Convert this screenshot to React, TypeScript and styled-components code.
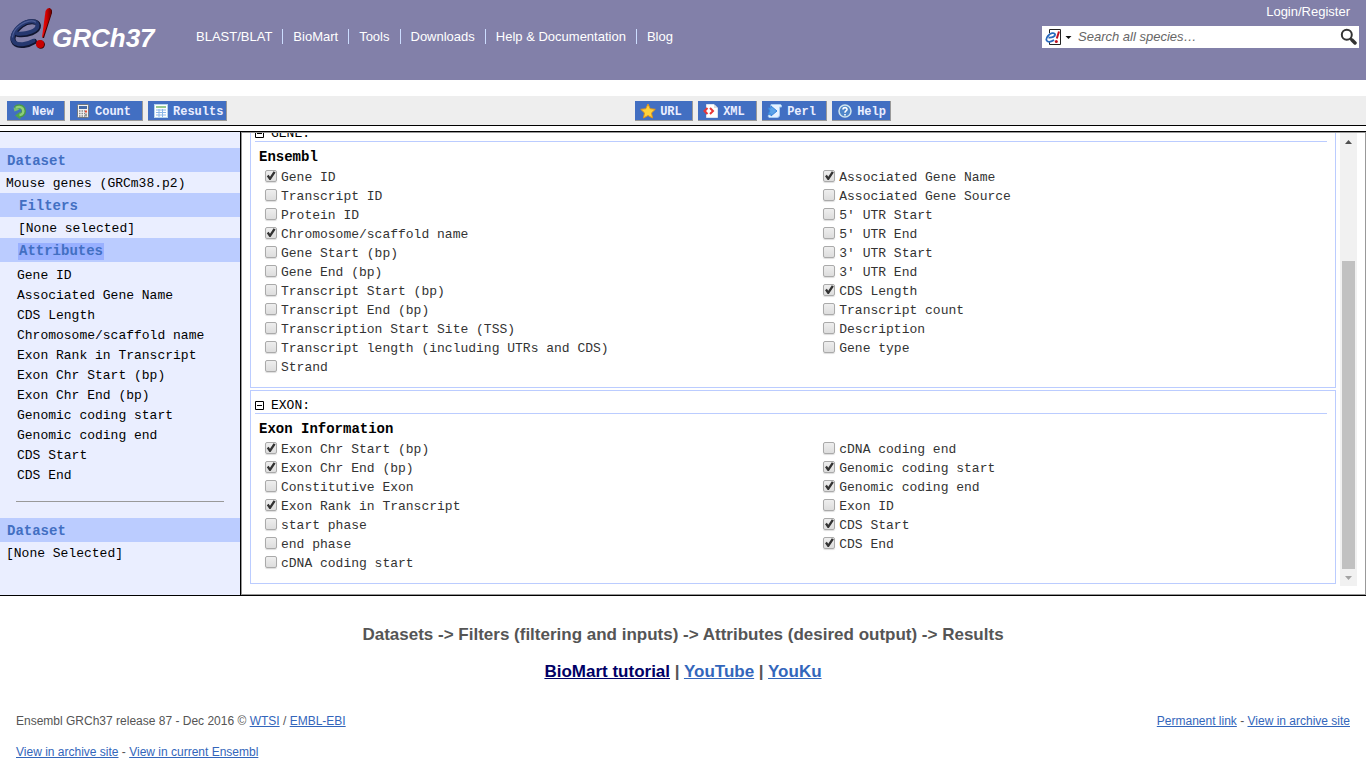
import React, { useLayoutEffect, useRef } from "react";
import styled, { createGlobalStyle } from "styled-components";

const GlobalStyle = createGlobalStyle`
  * { box-sizing: border-box; }
  body { margin: 0; background: #fff; font-family: "Liberation Sans", Arial, sans-serif; }
`;

const mono = `"Liberation Mono", "Courier New", monospace`;

/* ---------- masthead ---------- */

const Masthead = styled.header`
  display: flex;
  justify-content: space-between;
  height: 80px;
  background: #8280a9;
  color: #fff;
  font-size: 13px;
`;
const Brand = styled.div`
  display: flex;
  align-items: flex-start;
  padding-left: 8px;
`;
const LogoLink = styled.a`
  display: flex;
  align-items: flex-start;
  width: 178px;
  padding-top: 6px;
  color: #fff;
  text-decoration: none;
`;
const LogoText = styled.span`
  padding-top: 17px;
  font: italic bold 26px/30px "Liberation Sans", Arial, sans-serif;
`;
const Nav = styled.nav`
  display: flex;
  padding-top: 29px;
`;
const NavLink = styled.a`
  padding: 0 10px;
  line-height: 15px;
  color: #fff;
  text-decoration: none;
  white-space: nowrap;
  & + & { border-left: 1px solid #ccddff; }
`;
const Account = styled.div`
  display: flex;
  flex-direction: column;
  align-items: flex-end;
  padding: 4px 7px 0 0;
`;
const LoginLink = styled.a`
  margin-right: 9px;
  line-height: 15px;
  color: #fff;
  text-decoration: none;
`;
const SearchForm = styled.form`
  display: flex;
  align-items: center;
  width: 317px;
  height: 22px;
  margin-top: 7px;
  padding: 0 2px 0 3px;
  background: #fff;
`;
const PlainButton = styled.button`
  display: flex;
  align-items: center;
  padding: 0;
  border: 0;
  background: none;
`;
const SearchInput = styled.input`
  flex: 1;
  min-width: 0;
  padding: 0 0 0 6px;
  border: 0;
  outline: 0;
  font: italic 13px/20px "Liberation Sans", Arial, sans-serif;
  &::placeholder { color: #666; opacity: 1; }
`;

/* ---------- toolbar ---------- */

const Toolbar = styled.div`
  display: flex;
  gap: 3px;
  margin-top: 16px;
  height: 30px;
  padding: 5px 0 0 7px;
  border-bottom: 1px solid #000;
  background: #eee;
`;
const ToolGroup = styled.div<{ $share?: string }>`
  display: flex;
  gap: 5px;
  flex: 0 0 ${(p) => p.$share ?? "auto"};
`;
const ToolButton = styled.button<{ $width: number }>`
  display: flex;
  align-items: center;
  gap: 4px;
  width: ${(p) => p.$width}px;
  height: 20px;
  padding: 0 0 0 5px;
  border: solid #999;
  border-width: 0 1px 1px 0;
  background: #426fc2;
  color: #eaeeff;
  font: bold 12px/16px ${mono};
  white-space: nowrap;
  svg { flex: none; }
`;
const ToolLabel = styled.span`
  padding-top: 2px;
`;

/* ---------- workspace ---------- */

const Workspace = styled.main`
  display: flex;
  margin-top: 5px;
  border: solid #000;
  border-width: 1px 0;
  font: 13px/20px ${mono};
`;
const Sidebar = styled.aside`
  flex: 0 0 241px;
  padding: 16px 0 32px;
  border-right: 1px solid #000;
  background: #eaeeff;
  color: #000;
`;
const SideHeading = styled.h2<{ $nested?: boolean }>`
  margin: 0;
  padding: 4px 0 1px ${(p) => (p.$nested ? 18 : 6)}px;
  background: #bbccff;
  color: #426fc2;
  font: bold 14px/19px ${mono};
`;
const Mark = styled.span<{ $active?: boolean }>`
  display: inline-block;
  padding: 0 1px;
  line-height: 17px;
  background: ${(p) => (p.$active ? "#99b0ff" : "transparent")};
`;
const SideValue = styled.p<{ $indent: number }>`
  margin: 0;
  padding: 2px 0 0 ${(p) => p.$indent}px;
  line-height: 19px;
`;
const SideList = styled.ul`
  margin: 0;
  padding: 4px 0 0 17px;
  list-style: none;
`;
const SideRule = styled.hr`
  height: 1px;
  margin: 15px 16px 16px;
  border: 0;
  background: #999;
`;
const Panel = styled.section`
  display: flex;
  flex-direction: column;
  flex: 1;
  min-width: 0;
  padding: 0 8px 8px;
  border: 1px solid #999;
`;
const PanelBody = styled.div`
  display: flex;
  gap: 4px;
  flex: 1 1 0px;
  min-height: 0;
`;
const Scroller = styled.div`
  flex: 1;
  min-width: 0;
  overflow-y: auto;
  scrollbar-width: none;
  padding-bottom: 2px;
`;
const Scrollbar = styled.div`
  display: flex;
  flex-direction: column;
  align-items: center;
  flex: 0 0 17px;
  padding: 6px 0 5px;
  background: #f1f1f1;
`;
const Thumb = styled.div`
  flex: 1;
  width: 13px;
  margin: 116px 0 6px;
  background: #c1c1c1;
`;
const Card = styled.section`
  padding: 0 0 11px 4px;
  border: 1px solid #bbccff;
  & + & { margin-top: 2px; }
`;
const CardTitle = styled.h3`
  display: flex;
  align-items: center;
  gap: 7px;
  margin: 0 8px 0 0;
  padding-top: 7px;
  border-bottom: 1px solid #bbccff;
  color: #000;
  font: 13px/15px ${mono};
`;
const Subtitle = styled.h4`
  margin: 0;
  padding: 5px 0 0 4px;
  color: #000;
  font: bold 14px/20px ${mono};
`;
const Columns = styled.div`
  display: grid;
  grid-template-columns: 12fr 11fr;
  padding-left: 10px;
`;
const Option = styled.label`
  display: flex;
  align-items: flex-start;
  gap: 4px;
  padding-top: 3px;
  color: #333;
  line-height: 16px;
  white-space: nowrap;
`;
const Tick = styled.input`
  appearance: none;
  flex: none;
  width: 12px;
  height: 12px;
  margin: 0;
  border: 1px solid #aaa;
  border-radius: 2px;
  background: linear-gradient(#eee, #ddd);
  box-shadow: 0 1px 1px #ddd;
  &:checked::before {
    content: "";
    display: block;
    width: 10px;
    height: 10px;
    background: #333;
    clip-path: polygon(8% 52%, 26% 38%, 40% 58%, 76% 2%, 96% 14%, 46% 90%, 34% 90%);
  }
`;

/* ---------- footer ---------- */

const Guide = styled.div`
  padding-top: 28px;
  color: #555;
  font-size: 17px;
  font-weight: bold;
  line-height: 21px;
  text-align: center;
  p { margin: 0 0 16px; }
`;
const TextLink = styled.a<{ $dark?: boolean }>`
  color: ${(p) => (p.$dark ? "#000066" : "#3366bb")};
  text-decoration: underline;
`;
const Footer = styled.footer`
  padding: 8px 16px 0;
  color: #555;
  font-size: 12px;
  line-height: 15px;
`;
const FooterRow = styled.div`
  display: flex;
  justify-content: space-between;
  margin: 8px 0 16px;
`;

/* ---------- drawings ---------- */

const EnsemblMark = () => (
  <svg width="44" height="46" viewBox="0 0 44 46" aria-hidden="true">
    <defs>
      <linearGradient id="red" x1="0" x2="1">
        <stop offset="0" stopColor="#f01010" />
        <stop offset="0.5" stopColor="#d00000" />
        <stop offset="1" stopColor="#700000" />
      </linearGradient>
    </defs>
    <g fill="none" strokeLinecap="round">
      <path d="M10 28.500C19 29.500 31 26 30.500 19.500C29.500 14.500 20 14.500 13.500 19.500C5.500 26 3 33 6.500 37C11 41.500 20 39.500 26.500 35.500" stroke="#10152f" strokeWidth="5" />
      <path d="M9 27.500C18 28.500 30 25 29.500 18.800C28.500 14 19.500 14 13 18.800C5 25 2.800 32 6 35.800C10 40 19 38.500 25.500 34.800" stroke="#26386f" strokeWidth="4" />
      <path d="M4.500 31C5 26 8.500 21.500 13 18.500C18 15 24.500 14 27.500 16" stroke="#4d5d96" strokeWidth="1.200" />
    </g>
    <path d="M34.500 32L38.500 5Q40 2 43 3Q45 5 43.500 8.500L36 32Z" fill="#400" />
    <path d="M34 31L37.500 5Q39 1.500 42 2Q44 4 43 8L35 31Z" fill="url(#red)" />
    <circle cx="32.800" cy="38.600" r="4.200" fill="#400" />
    <circle cx="32" cy="38" r="4" fill="#c80000" />
  </svg>
);

const SpeciesIcon = () => (
  <svg width="27" height="18" viewBox="0 0 27 18" aria-hidden="true">
    <path d="M4.500 5V1.500H15.500V16.500H4.500V13" fill="#fff" stroke="#222" />
    <path d="M3.500 9.500C7 9.800 10.500 8.500 10 6.200C9.200 4.300 5.500 5 3 7.800C0 11.500 1.500 14 4.500 13.800C6.500 13.500 8 12.700 9 12" fill="none" stroke="#2869bd" strokeWidth="1.800" />
    <path d="M11.800 10.500L14 3.500" stroke="#c01020" strokeWidth="2" />
    <circle cx="11.300" cy="13.500" r="1.500" fill="#c01020" />
    <path d="M20.500 8H26.500L23.500 11Z" fill="#111" />
  </svg>
);

const SearchIcon = () => (
  <svg width="17" height="18" viewBox="0 0 17 18" aria-hidden="true">
    <circle cx="6.800" cy="6.800" r="5" fill="none" stroke="#333" strokeWidth="2" />
    <path d="M10.500 10.500L12 12" stroke="#333" strokeWidth="2" />
    <path d="M12 12L15 15" stroke="#333" strokeWidth="3.500" strokeLinecap="round" />
  </svg>
);

type IconName = "new" | "count" | "results" | "url" | "xml" | "perl" | "help";

const iconArt: Record<IconName, React.ReactNode> = {
  new: (
    <>
      <path d="M3.500 5C5.500 3 9.500 3 11 5.500C12.800 9 11 12.300 7.500 12.300" fill="none" stroke="#4a9a48" strokeWidth="4.500" />
      <path d="M8.500 8.500V16.500L3 12.500Z" fill="#4fa54c" />
      <path d="M3.800 5C6 3.500 9.200 3.500 10.700 5.800C12.300 9 10.800 11.800 7.500 12" fill="none" stroke="#8fcf7a" strokeWidth="2.500" />
      <path d="M1.500 4.500L7.500 6.500L2.500 8.500Z" fill="#78c169" />
    </>
  ),
  count: (
    <>
      <rect x="2.500" y="1.500" width="11" height="13" rx="1" fill="#f2f2f2" stroke="#71777e" />
      <rect x="4" y="3" width="8" height="3" fill="#456aa6" />
      <path d="M4 8H10M4 10.500H10M4 13H10" stroke="#888" strokeWidth="1.500" strokeDasharray="1.500 1" />
      <path d="M11 7.500V9.500" stroke="#e34b32" strokeWidth="2" />
      <path d="M11 10.500V13.500" stroke="#777" strokeWidth="1.500" />
    </>
  ),
  results: (
    <>
      <rect x="1.500" y="1.500" width="13" height="13" fill="#fff" stroke="#b8d7ec" />
      <path d="M3 4H13" stroke="#75b96a" strokeWidth="1.500" />
      <path d="M3 7H13M3 9.500H13M3 12H13M6 6V14M9.500 6V14" stroke="#8bb8e8" />
    </>
  ),
  url: (
    <path d="M8 1L10.200 5.700L15.300 6.300L11.500 9.900L12.500 15L8 12.500L3.500 15L4.500 9.900L.7 6.300L5.800 5.700Z" fill="#ffd33b" stroke="#e1961c" />
  ),
  xml: (
    <>
      <path d="M3.500 1.500H11L14.500 5V14.500H3.500Z" fill="#fff" stroke="#dce4f2" />
      <path d="M11 1.500V5H14.500" fill="#ddd" />
      <path d="M4.500 5L1.500 8L4.500 11M7 5L10 8L7 11" fill="none" stroke="#e93636" strokeWidth="2" />
    </>
  ),
  perl: (
    <>
      <path d="M4 1.500H13.500Q15 2 14.500 4H12.500V12Q12.500 14.500 10 14.500H2Q.8 13.500 1.500 12H3.500Z" fill="#e6f2ff" stroke="#a5cdf4" />
      <path d="M1 5H4V3L10 8L4 13V11H1L3 8Z" fill="#5ba3e8" stroke="#3685dc" />
    </>
  ),
  help: (
    <>
      <circle cx="8" cy="8" r="6" fill="#4f86c9" stroke="#cfe5ef" strokeWidth="1.500" />
      <path d="M6 6.500C6 4 10.200 4 10 6.500C10 8 8 8 8 9.700M8 11V12.500" fill="none" stroke="#fff" strokeWidth="1.600" />
    </>
  ),
};

const ToolIcon = ({ name }: { name: IconName }) => (
  <svg width="16" height="16" viewBox="0 0 16 16" aria-hidden="true">{iconArt[name]}</svg>
);

const CollapseIcon = () => (
  <svg width="9" height="9" viewBox="0 0 9 9" aria-hidden="true">
    <path d="M.5 .5H8.500V8.500H.5ZM2 4.500H7" fill="none" stroke="#000" />
  </svg>
);

/* ---------- data ---------- */

type Tool = { icon: IconName; label: string; width: number };
type Attribute = [label: string, checked?: boolean];

const queryTools: Tool[] = [
  { icon: "new", label: "New", width: 58 },
  { icon: "count", label: "Count", width: 73 },
  { icon: "results", label: "Results", width: 79 },
];
const exportTools: Tool[] = [
  { icon: "url", label: "URL", width: 58 },
  { icon: "xml", label: "XML", width: 59 },
  { icon: "perl", label: "Perl", width: 65 },
  { icon: "help", label: "Help", width: 59 },
];
const navItems = ["BLAST/BLAT", "BioMart", "Tools", "Downloads", "Help & Documentation", "Blog"];
const selected = [
  "Gene ID", "Associated Gene Name", "CDS Length", "Chromosome/scaffold name",
  "Exon Rank in Transcript", "Exon Chr Start (bp)", "Exon Chr End (bp)",
  "Genomic coding start", "Genomic coding end", "CDS Start", "CDS End",
];
const geneColumns: Attribute[][] = [
  [
    ["Gene ID", true], ["Transcript ID"], ["Protein ID"], ["Chromosome/scaffold name", true],
    ["Gene Start (bp)"], ["Gene End (bp)"], ["Transcript Start (bp)"], ["Transcript End (bp)"],
    ["Transcription Start Site (TSS)"], ["Transcript length (including UTRs and CDS)"], ["Strand"],
  ],
  [
    ["Associated Gene Name", true], ["Associated Gene Source"], ["5' UTR Start"], ["5' UTR End"],
    ["3' UTR Start"], ["3' UTR End"], ["CDS Length", true], ["Transcript count"],
    ["Description"], ["Gene type"],
  ],
];
const exonColumns: Attribute[][] = [
  [
    ["Exon Chr Start (bp)", true], ["Exon Chr End (bp)", true], ["Constitutive Exon"],
    ["Exon Rank in Transcript", true], ["start phase"], ["end phase"], ["cDNA coding start"],
  ],
  [
    ["cDNA coding end"], ["Genomic coding start", true], ["Genomic coding end", true],
    ["Exon ID"], ["CDS Start", true], ["CDS End", true],
  ],
];

const Tools = ({ items, share }: { items: Tool[]; share?: string }) => (
  <ToolGroup $share={share}>
    {items.map((t) => (
      <ToolButton key={t.label} type="button" $width={t.width}>
        <ToolIcon name={t.icon} />
        <ToolLabel>{t.label}</ToolLabel>
      </ToolButton>
    ))}
  </ToolGroup>
);

const AttributeCard = ({ title, subtitle, columns }: { title: string; subtitle: string; columns: Attribute[][] }) => (
  <Card>
    <CardTitle><CollapseIcon />{title}</CardTitle>
    <Subtitle>{subtitle}</Subtitle>
    <Columns>
      {columns.map((column, i) => (
        <div key={i}>
          {column.map(([label, checked]) => (
            <Option key={label}>
              <Tick type="checkbox" defaultChecked={checked} />
              {label}
            </Option>
          ))}
        </div>
      ))}
    </Columns>
  </Card>
);

export default function App() {
  const scroller = useRef<HTMLDivElement>(null);

  // The attribute list opens scrolled to its end.
  useLayoutEffect(() => {
    if (scroller.current) scroller.current.scrollTop = scroller.current.scrollHeight;
  }, []);

  return (
    <>
      <GlobalStyle />
      <Masthead>
        <Brand>
          <LogoLink href="#"><EnsemblMark /><LogoText>GRCh37</LogoText></LogoLink>
          <Nav>
            {navItems.map((item) => <NavLink key={item} href="#">{item}</NavLink>)}
          </Nav>
        </Brand>
        <Account>
          <LoginLink href="#">Login/Register</LoginLink>
          <SearchForm>
            <PlainButton type="button" aria-label="Choose species"><SpeciesIcon /></PlainButton>
            <SearchInput type="text" aria-label="Search" placeholder="Search all species…" />
            <PlainButton type="submit" aria-label="Search"><SearchIcon /></PlainButton>
          </SearchForm>
        </Account>
      </Masthead>

      <Toolbar>
        <Tools items={queryTools} share="46%" />
        <Tools items={exportTools} />
      </Toolbar>

      <Workspace>
        <Sidebar>
          <SideHeading><Mark>Dataset</Mark></SideHeading>
          <SideValue $indent={6}>Mouse genes (GRCm38.p2)</SideValue>
          <SideHeading $nested><Mark>Filters</Mark></SideHeading>
          <SideValue $indent={18}>[None selected]</SideValue>
          <SideHeading $nested><Mark $active>Attributes</Mark></SideHeading>
          <SideList>
            {selected.map((name) => <li key={name}>{name}</li>)}
          </SideList>
          <SideRule />
          <SideHeading><Mark>Dataset</Mark></SideHeading>
          <SideValue $indent={6}>[None Selected]</SideValue>
        </Sidebar>
        <Panel>
          <PanelBody>
            <Scroller ref={scroller}>
              <AttributeCard title="GENE:" subtitle="Ensembl" columns={geneColumns} />
              <AttributeCard title="EXON:" subtitle="Exon Information" columns={exonColumns} />
            </Scroller>
            <Scrollbar aria-hidden="true">
              <svg width="7" height="6" viewBox="0 0 7 6"><path d="M0 5L3.500 1L7 5Z" fill="#505050" /></svg>
              <Thumb />
              <svg width="7" height="6" viewBox="0 0 7 6"><path d="M0 1L3.500 5L7 1Z" fill="#a3a3a3" /></svg>
            </Scrollbar>
          </PanelBody>
        </Panel>
      </Workspace>

      <Guide>
        <p>Datasets -&gt; Filters (filtering and inputs) -&gt; Attributes (desired output) -&gt; Results</p>
        <p>
          <TextLink href="#" $dark>BioMart tutorial</TextLink> | <TextLink href="#">YouTube</TextLink> | <TextLink href="#">YouKu</TextLink>
        </p>
      </Guide>

      <Footer>
        <FooterRow>
          <span>Ensembl GRCh37 release 87 - Dec 2016 © <TextLink href="#">WTSI</TextLink> / <TextLink href="#">EMBL-EBI</TextLink></span>
          <span><TextLink href="#">Permanent link</TextLink> - <TextLink href="#">View in archive site</TextLink></span>
        </FooterRow>
        <FooterRow>
          <span><TextLink href="#">View in archive site</TextLink> - <TextLink href="#">View in current Ensembl</TextLink></span>
        </FooterRow>
      </Footer>
    </>
  );
}
